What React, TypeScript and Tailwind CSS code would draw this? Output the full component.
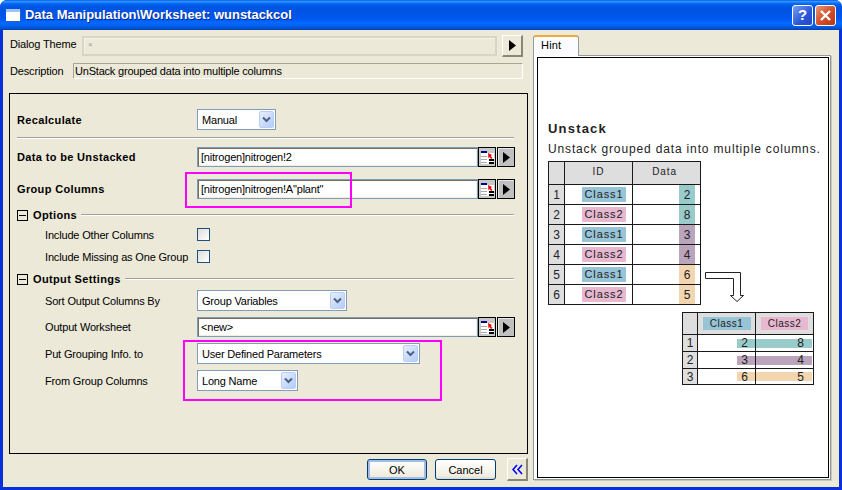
import React from "react";

const ui = "font-['Liberation_Sans',sans-serif] text-[11px] leading-[14px] text-black";

function Chevron() {
  return (
    <svg width="9" height="7" viewBox="0 0 9 7" className="block">
      <path d="M1 1.5 L4.5 5 L8 1.5" fill="none" stroke="#4d6185" strokeWidth="2" />
    </svg>
  );
}

function Select({ value, w }: { value: string; w: string }) {
  return (
    <div className={`${w} h-[21px] bg-white border border-[#7f9db9] flex items-center pl-[4px] pr-[1px] shrink-0`}>
      <span className="flex-1 truncate tracking-[-0.2px]">{value}</span>
      <span className="w-[15px] h-[17px] rounded-[2px] border border-[#b9cdf5] bg-[linear-gradient(135deg,#e6eefc,#b4ccf8)] flex items-center justify-center">
        <Chevron />
      </span>
    </div>
  );
}

function Triangle() {
  return (
    <svg width="7" height="11" viewBox="0 0 7 11" className="block">
      <path d="M0 0 L7 5.5 L0 11 Z" fill="#000" />
    </svg>
  );
}

function PickerIcon() {
  return (
    <svg width="15" height="17" viewBox="0 0 15 17" className="block">
      <rect x="0" y="0" width="15" height="17" fill="#c8c8c8" />
      <rect x="1" y="2" width="6" height="2" fill="#000080" />
      <rect x="1" y="4" width="13" height="11" fill="#fff" />
      <path d="M1 7.5h6M1 10.5h6M1 13.5h6" stroke="#aaa" strokeWidth="1" />
      <rect x="9" y="10" width="5" height="2" fill="#000" />
      <rect x="9" y="13" width="5" height="2" fill="#000" />
      <path d="M8 4 L12 6 L10.8 7 L12.5 9 L11 10 L9.5 8 L8.5 9.5 Z" fill="#ff0000" />
    </svg>
  );
}

function PathInput({ value, w }: { value: string; w: string }) {
  return (
    <div className={`${w} h-[20px] flex shrink-0`}>
      <div className="flex-1 h-full bg-white border border-[#7f9db9] flex items-center pl-[3px] shadow-[inset_1px_1px_0_#716f64,inset_-1px_-1px_0_#f1efe2]">
        <span className="tracking-[-0.2px]">{value}</span>
      </div>
      <div className="w-[18px] h-full border border-black bg-[#c8c8c8] flex items-center justify-center">
        <PickerIcon />
      </div>
      <div className="w-[18px] h-full ml-[1px] border border-black bg-[#c0c0c0] shadow-[inset_1px_1px_0_#e8e8e8] flex items-center justify-center">
        <Triangle />
      </div>
    </div>
  );
}

function Check() {
  return <div className="w-[13px] h-[13px] border border-[#1c5180] bg-[linear-gradient(135deg,#dcdcd7,#ffffff)] shrink-0" />;
}

function Row({ label, bold, indent, children, cls }: { label: string; bold?: boolean; indent?: boolean; children: React.ReactNode; cls: string }) {
  return (
    <div className={`flex items-center pl-[7px] ${cls}`}>
      <div className={`w-[180px] shrink-0 whitespace-nowrap ${bold ? "font-bold tracking-[0.35px]" : "tracking-[-0.17px]"} ${indent ? "pl-[28px]" : ""}`}>{label}</div>
      {children}
    </div>
  );
}

function GroupHead({ label, cls }: { label: string; cls: string }) {
  return (
    <div className={`flex items-center h-[11px] ml-[7px] w-[497px] ${cls}`}>
      <div className="w-[11px] h-[11px] border border-black flex items-center justify-center shrink-0">
        <div className="w-[7px] h-[1px] bg-black" />
      </div>
      <span className="ml-[5px] pb-[2px] font-bold tracking-[0.35px]">{label}</span>
      <div className="flex-1 ml-[4px] mb-[2px] h-[2px] border-t border-[#a0a0a0] bg-white" />
    </div>
  );
}

const hintFont = "font-['Liberation_Sans',sans-serif] text-[11px] tracking-[0.9px] text-[#222]";

function IdxCell({ n }: { n: number }) {
  return <div className="bg-[#dedede] border-r border-b border-[#1a1a1a] flex items-center justify-center text-[12px] tracking-normal">{n}</div>;
}

const CLASS1 = "bg-[#97c4d6]";
const CLASS2 = "bg-[#e7b8d0]";

const rows1 = [
  ["Class1", "2", "bg-[#9acbcb]"],
  ["Class2", "8", "bg-[#9acbcb]"],
  ["Class1", "3", "bg-[#baa5bc]"],
  ["Class2", "4", "bg-[#baa5bc]"],
  ["Class1", "6", "bg-[#f3d5b0]"],
  ["Class2", "5", "bg-[#f3d5b0]"],
];

const rows2 = [
  ["2", "8", "bg-[#9acbcb]"],
  ["3", "4", "bg-[#baa5bc]"],
  ["6", "5", "bg-[#f3d5b0]"],
];

function Table1() {
  return (
    <div className={`grid grid-cols-[16px_68px_68px] grid-rows-[23px_repeat(6,20px)] w-[153px] border-l border-t border-[#1a1a1a] ${hintFont}`}>
      <div className="bg-[#dedede] border-r border-b border-[#1a1a1a]" />
      <div className="bg-[#dedede] border-r border-b border-[#1a1a1a] flex items-center justify-center text-[10px] pb-[2px]">ID</div>
      <div className="bg-[#dedede] border-r border-b border-[#1a1a1a] flex items-center justify-center text-[10px] pb-[2px] pr-[4px]">Data</div>
      {rows1.map((r, i) => (
        <React.Fragment key={i}>
          <IdxCell n={i + 1} />
          <div className="border-r border-b border-[#1a1a1a] flex items-center justify-end pr-[6px]">
            <span className={`w-[44px] h-[15px] leading-[15px] text-center ${r[0] === "Class1" ? CLASS1 : CLASS2}`}>{r[0]}</span>
          </div>
          <div className="border-r border-b border-[#1a1a1a] flex justify-end pr-[5px]">
            <span className={`w-[16px] h-full flex items-center justify-center text-[12px] tracking-normal ${r[2]}`}>{r[1]}</span>
          </div>
        </React.Fragment>
      ))}
    </div>
  );
}

function Table2() {
  return (
    <div className={`grid grid-cols-[15px_58px_58px] grid-rows-[22px_17px_17px_16px] w-[132px] border-l border-t border-[#1a1a1a] ${hintFont}`}>
      <div className="bg-[#dedede] border-r border-b border-[#1a1a1a]" />
      <div className="bg-[#dedede] border-r border-b border-[#1a1a1a] flex items-center justify-center">
        <span className={`w-[48px] h-[13px] leading-[13px] text-center tracking-[0.5px] text-[10px] ${CLASS1}`}>Class1</span>
      </div>
      <div className="bg-[#dedede] border-r border-b border-[#1a1a1a] flex items-center justify-center">
        <span className={`w-[47px] h-[13px] leading-[13px] text-center tracking-[0.5px] text-[10px] ${CLASS2}`}>Class2</span>
      </div>
      {rows2.map((r, i) => (
        <React.Fragment key={i}>
          <IdxCell n={i + 1} />
          <div className="border-r border-b border-[#1a1a1a] flex items-center justify-end">
            <span className={`w-[18px] h-[9px] flex items-center justify-center pr-[3px] text-[12px] tracking-normal ${r[2]}`}>{r[0]}</span>
          </div>
          <div className="border-r border-b border-[#1a1a1a] flex items-center pr-[1px]">
            <span className={`flex-1 h-[9px] flex items-center justify-end pr-[8px] text-[12px] tracking-normal ${r[2]}`}>{r[1]}</span>
          </div>
        </React.Fragment>
      ))}
    </div>
  );
}

export default function App() {
  return (
    <div className={`relative w-[842px] h-[490px] overflow-hidden bg-[#0831d9] rounded-t-[7px] flex flex-col ${ui}`}>
      {/* title bar */}
      <div className="h-[30px] shrink-0 flex items-center pl-[6px] pr-[6px] bg-[linear-gradient(180deg,#0058ee_0%,#3593ff_5%,#127dff_9%,#0262ee_14%,#0057e5_20%,#0054e3_30%,#0055eb_56%,#005bf5_66%,#026afe_76%,#0062ef_86%,#0052d6_94%,#0040ab_100%)]">
        <div className="w-[14px] h-[12px] bg-white border-t-[3px] border-[#9cc4f4] shadow-[1px_1px_0_#2a5fc0]" />
        <span className="ml-[5px] font-bold text-[13px] text-white [text-shadow:1px_1px_0_#0a2a90] tracking-[-0.025px] whitespace-nowrap">
          Data Manipulation\Worksheet: wunstackcol
        </span>
        <div className="ml-auto flex gap-[2px]">
          <div className="w-[21px] h-[21px] rounded-[3px] border border-white bg-[linear-gradient(135deg,#7d9ef0,#2a56d8_60%,#2248c8)] flex items-center justify-center text-white font-bold text-[15px]">?</div>
          <div className="w-[21px] h-[21px] rounded-[3px] border border-white bg-[linear-gradient(135deg,#e89878,#d4512c_50%,#b8341a)] flex items-center justify-center">
            <svg width="13" height="13" viewBox="0 0 13 13">
              <path d="M2 2 L11 11 M11 2 L2 11" stroke="#fff" strokeWidth="2.4" />
            </svg>
          </div>
        </div>
      </div>

      {/* client */}
      <div className="flex-1 mx-[3px] mb-[3px] bg-[#ece9d8] flex min-h-0">
        {/* left side */}
        <div className="w-[525px] shrink-0 flex flex-col">
          <div className="flex mt-[5px] h-[23px]">
            <span className="ml-[7px] w-[72px] pt-[2px] tracking-[-0.15px] whitespace-nowrap">Dialog Theme</span>
            <div className="w-[415px] h-[20px] mt-[1px] border-2 border-[#d8d5c6] bg-[#ece9d8] pl-[4px] text-[8px] text-[#999] leading-[14px] shadow-[inset_1px_1px_0_#f6f4ea]">×</div>
            <div className="ml-[5px] w-[21px] h-[22px] bg-[#ece9d8] border-t border-l border-white border-r-[2px] border-b-[2px] border-r-[#8a8778] border-b-[#8a8778] flex items-center justify-center">
              <Triangle />
            </div>
          </div>
          <div className="flex mt-[5px] h-[16px] items-center">
            <span className="ml-[7px] w-[63px] tracking-[-0.15px] whitespace-nowrap">Description</span>
            <div className="w-[450px] h-[16px] border-t border-l border-[#a8a598] border-r border-b border-r-white border-b-white pl-[1px] leading-[14px] tracking-[-0.2px] whitespace-nowrap">UnStack grouped data into multiple columns</div>
          </div>

          {/* main panel */}
          <div className="ml-[6px] mt-[14px] w-[519px] h-[361px] border border-black">
            <Row label="Recalculate" bold cls="mt-[15px]"><Select value="Manual" w="w-[79px]" /></Row>
            <div className="ml-[7px] mt-[7px] w-[497px] h-[2px] border-t border-[#a0a0a0] bg-white" />
            <Row label="Data to be Unstacked" bold cls="mt-[8px]"><PathInput value="[nitrogen]nitrogen!2" w="w-[318px]" /></Row>
            <Row label="Group Columns" bold cls="mt-[12px]"><PathInput value={'[nitrogen]nitrogen!A"plant"'} w="w-[318px]" /></Row>
            <GroupHead label="Options" cls="mt-[11px]" />
            <Row label="Include Other Columns" indent cls="mt-[7px] h-[13px]"><Check /></Row>
            <Row label="Include Missing as One Group" indent cls="mt-[9px] h-[13px]"><Check /></Row>
            <GroupHead label="Output Settings" cls="mt-[11px]" />
            <Row label="Sort Output Columns By" indent cls="mt-[5px]"><Select value="Group Variables" w="w-[150px]" /></Row>
            <Row label="Output Worksheet" indent cls="mt-[6px]"><PathInput value="<new>" w="w-[318px]" /></Row>
            <Row label="Put Grouping Info. to" indent cls="mt-[6px]"><Select value="User Defined Parameters" w="w-[223px]" /></Row>
            <Row label="From Group Columns" indent cls="mt-[6px]"><Select value="Long Name" w="w-[101px]" /></Row>
          </div>

          {/* footer buttons */}
          <div className="flex items-start mt-[4px] pl-[364px]">
            <div className="mt-[1px] w-[60px] h-[21px] rounded-[3px] border border-[#003c74] bg-[linear-gradient(180deg,#ffffff,#ece9d8)] shadow-[inset_0_0_0_2px_#a4bde8] flex items-center justify-center">OK</div>
            <div className="mt-[1px] ml-[8px] w-[61px] h-[21px] rounded-[3px] border border-[#003c74] bg-[linear-gradient(180deg,#ffffff,#f0eee2_85%,#dcd8c6)] flex items-center justify-center">Cancel</div>
            <div className="ml-[11px] w-[21px] h-[23px] bg-[#ece9d8] border-t border-l border-white border-r-[2px] border-b-[2px] border-r-[#8a8778] border-b-[#8a8778] flex items-center justify-center">
              <svg width="11" height="11" viewBox="0 0 11 11">
                <path d="M5 1 L1 5.5 L5 10 M10 1 L6 5.5 L10 10" fill="none" stroke="#0000ff" strokeWidth="1.6" />
              </svg>
            </div>
          </div>
        </div>

        {/* hint */}
        <div className="ml-[5px] w-[298px] flex flex-col">
          <div className="mt-[5px] w-[46px] h-[21px] -mb-[1px] z-10 bg-[#fcfcfe] border-x border-[#919b9c] border-t-[2px] border-t-[#f0a838] rounded-t-[3px] pl-[7px] pt-[1px] tracking-[0.2px]">Hint</div>
          <div className="h-[425px] border border-[#919b9c] bg-white shadow-[1px_1px_0_#c8c6b8] p-[1px_1px_1px_3px]">
            <div className="relative h-full border border-black bg-white pl-[10px]">
              <div className="pt-[63px] font-bold text-[13px] leading-[16px] tracking-[1.2px] text-[#222]">Unstack</div>
              <div className="mt-[5px] text-[12px] leading-[15px] tracking-[0.85px] text-[#222] whitespace-nowrap">Unstack grouped data into multiple columns.</div>
              <div className="mt-[4px]"><Table1 /></div>
              <div className="mt-[7px] ml-[134px]"><Table2 /></div>
              <svg width="40" height="31" viewBox="0 0 40 31" className="absolute left-[167px] top-[214px]">
                <path d="M0.5 0.5 H35.5 V23.5 H38.5 L32 29.5 L25.5 23.5 H28.5 V6.5 H0.5 Z" fill="#fff" stroke="#222" strokeWidth="1" />
              </svg>
            </div>
          </div>
        </div>
      </div>

      {/* highlight boxes */}
      <div className="absolute left-[185px] top-[172px] w-[167px] h-[36px] border-2 border-[#ff00ff] pointer-events-none" />
      <div className="absolute left-[183px] top-[340px] w-[259px] h-[61px] border-2 border-[#ff00ff] pointer-events-none" />
    </div>
  );
}
